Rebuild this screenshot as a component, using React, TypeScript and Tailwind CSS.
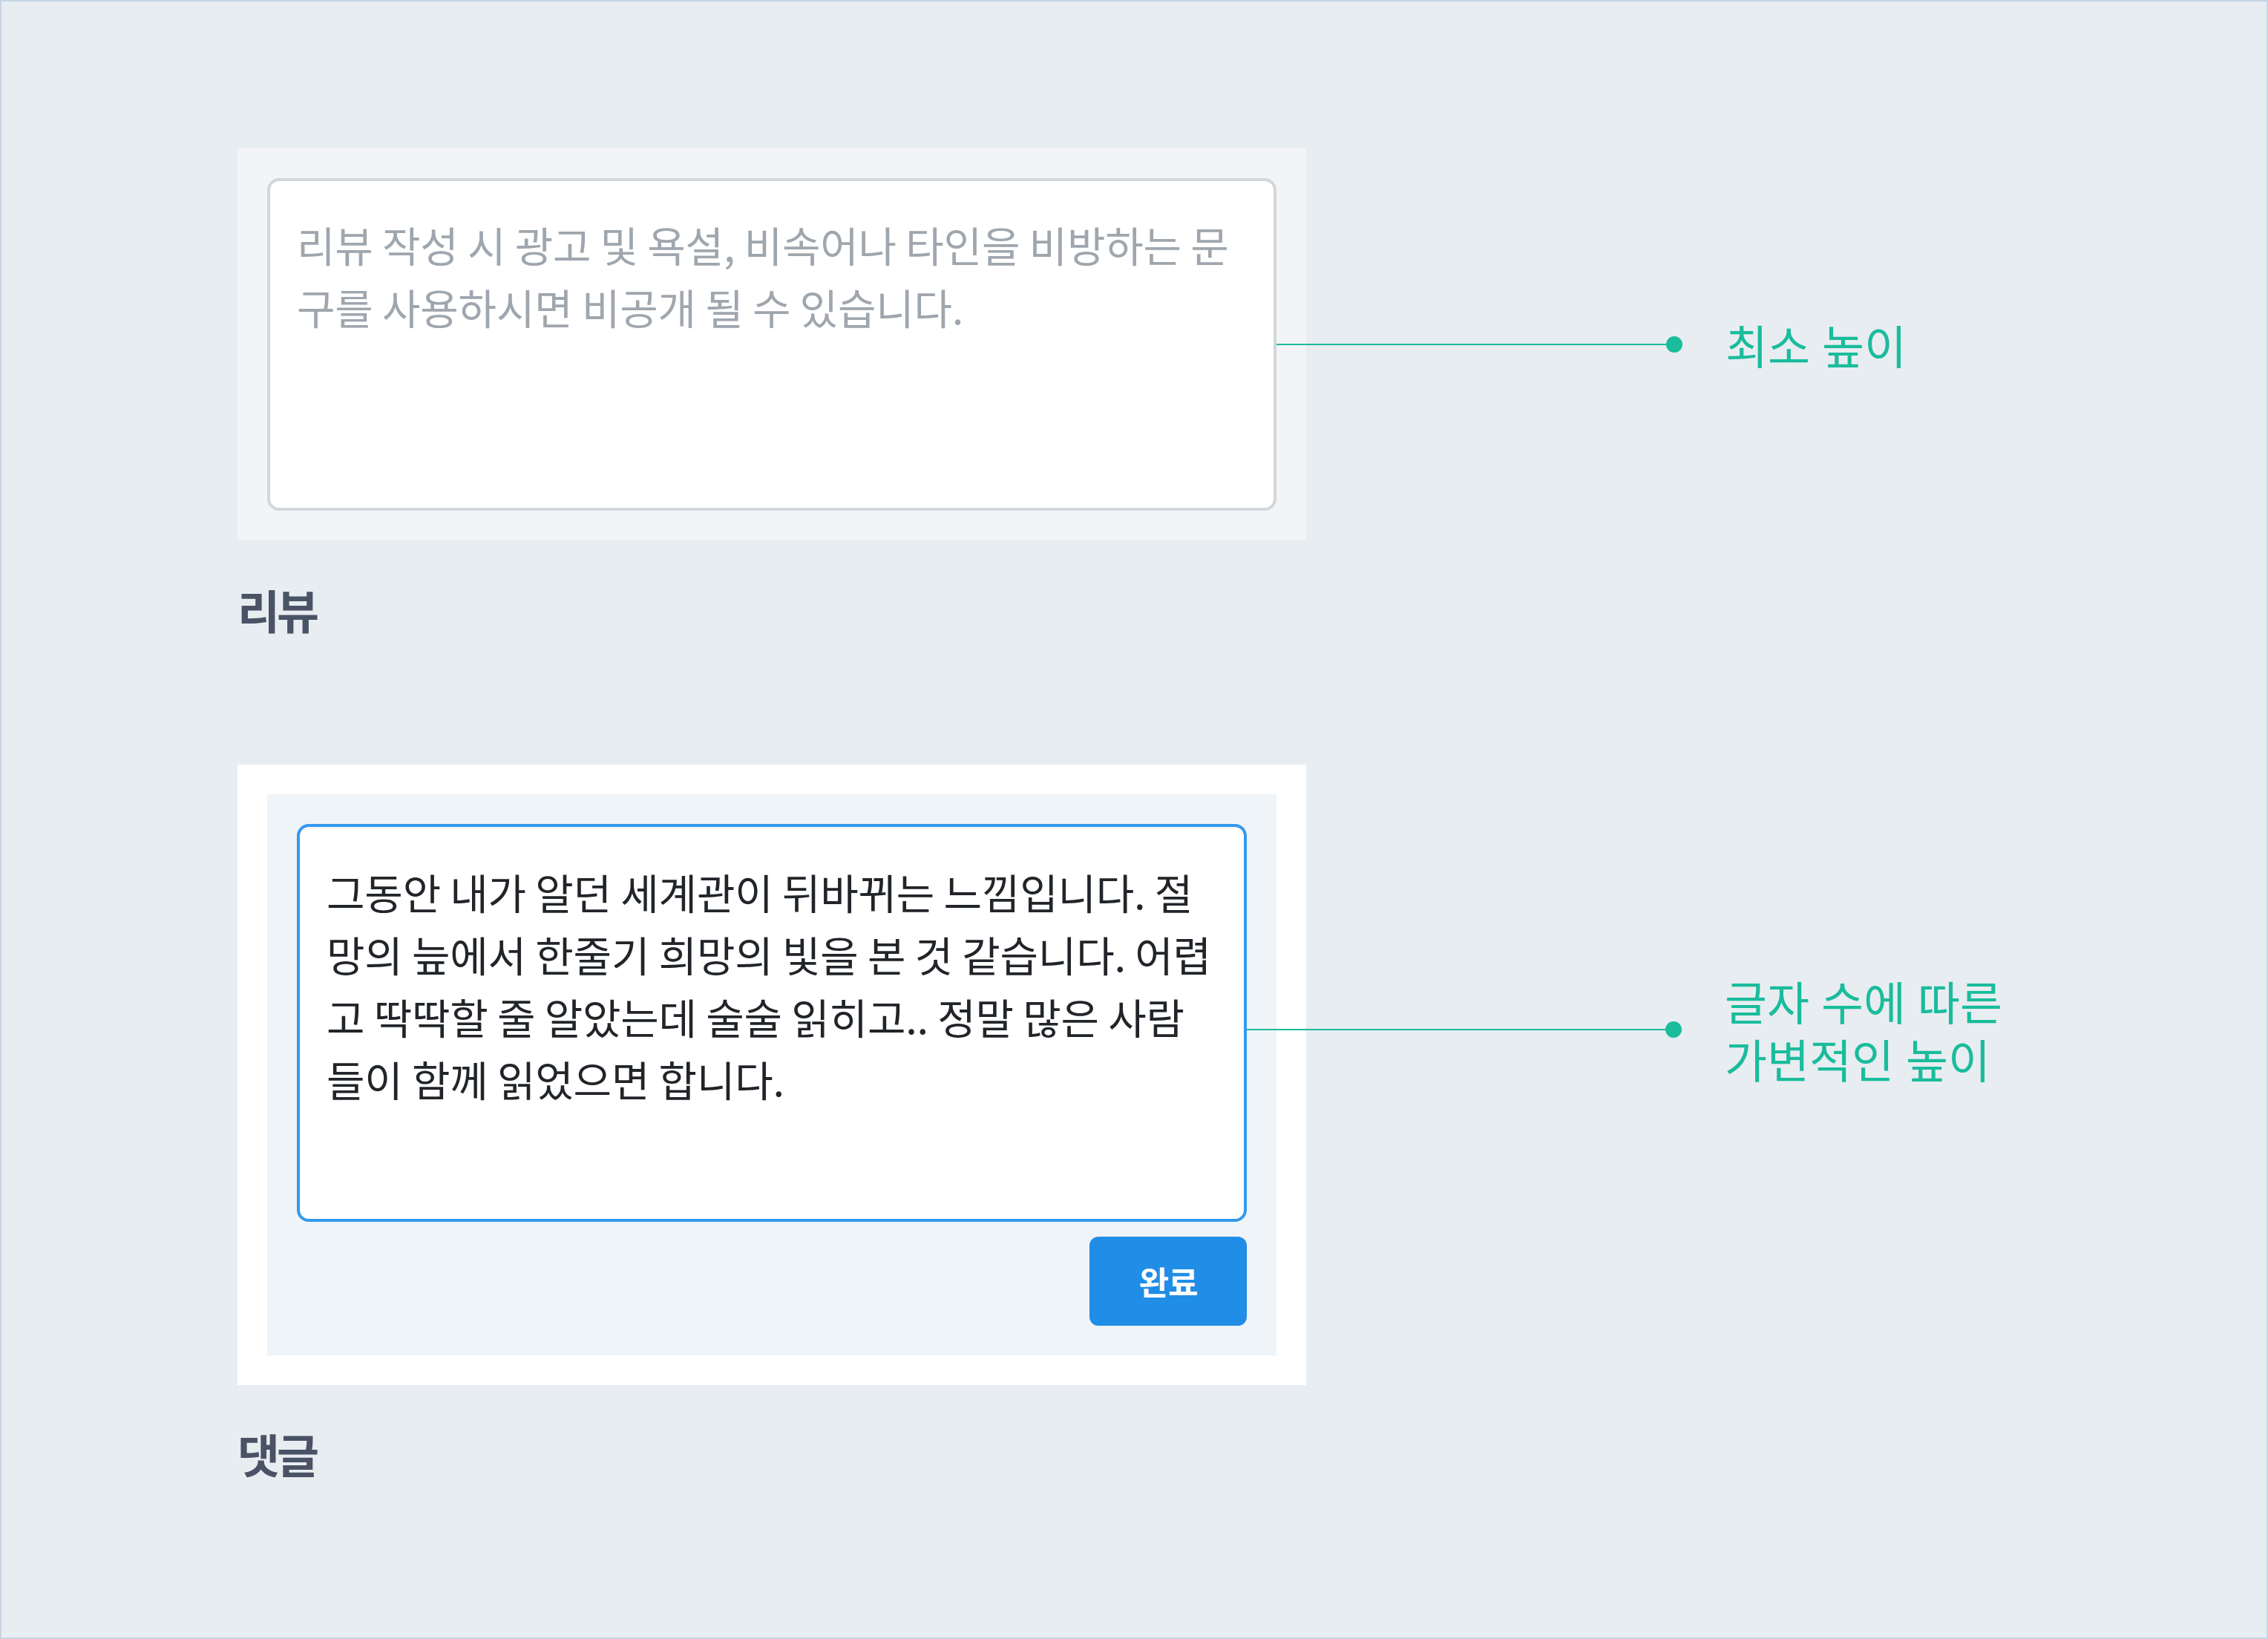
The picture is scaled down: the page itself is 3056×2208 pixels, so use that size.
import React from "react";

function Callout({ lineWidth, lines }: { lineWidth: number; lines: string[] }) {
  return (
    <div className="flex items-center">
      <div className="h-[2px] bg-[#1abc9c]" style={{ width: lineWidth }} />
      <div className="w-[22px] h-[22px] rounded-full bg-[#1abc9c] shrink-0" />
      <div className="ml-[58px] text-[62px] leading-[78px] [word-spacing:2px] text-[#1abc9c] whitespace-nowrap">
        {lines.map((l, i) => (
          <div key={i}>{l}</div>
        ))}
      </div>
    </div>
  );
}

export default function App() {
  return (
    <div className="w-[3056px] h-[2208px] border-2 border-[#c6d5e4] bg-[#e8edf1] pl-[318px] pt-[198px] font-['Noto_Sans_CJK_KR','Noto_Sans',sans-serif]">
      <div className="w-[1440px]">
        {/* Review */}
        <div className="bg-[#f3f4f6] p-[40px]">
          <div className="relative">
            <div className="h-[448px] rounded-[16px] border-4 border-[#d3d6db] bg-white pl-[36px] pt-[43px] text-[56px] leading-[84px] tracking-[-0.2px] text-[#9fa6ae] whitespace-nowrap">
              리뷰 작성 시 광고 및 욕설, 비속어나 타인을 비방하는 문
              <br />
              구를 사용하시면 비공개 될 수 있습니다.
            </div>
            <div className="absolute left-full top-1/2 -translate-y-1/2">
              <Callout lineWidth={525} lines={["최소 높이"]} />
            </div>
          </div>
        </div>
        <div className="mt-[62px] text-[62px] leading-[62px] font-semibold tracking-[-4px] text-[#4a5366]">
          리뷰
        </div>

        {/* Comment */}
        <div className="mt-[178px] bg-white p-[40px]">
          <div className="bg-[#eff4f8] p-[40px]">
            <div className="relative">
              <div className="h-[536px] rounded-[16px] border-4 border-[#3499ee] bg-white pl-[36px] pt-[45px] text-[56px] leading-[84px] tracking-[-0.2px] text-[#212529] whitespace-nowrap shadow-[inset_0_2px_3px_rgba(0,0,0,0.05)]">
                그동안 내가 알던 세계관이 뒤바뀌는 느낌입니다. 절
                <br />
                망의 늪에서 한줄기 희망의 빛을 본 것 같습니다. 어렵
                <br />
                고 딱딱할 줄 알았는데 술술 읽히고.. 정말 많은 사람
                <br />
                들이 함께 읽었으면 합니다.
              </div>
              <div className="absolute left-full top-[277px] -translate-y-1/2">
                <Callout lineWidth={564} lines={["글자 수에 따른", "가변적인 높이"]} />
              </div>
            </div>
            <div className="mt-[20px] flex justify-end">
              <button className="w-[212px] h-[120px] rounded-[12px] bg-[#208de6] text-white text-[44px] font-bold tracking-[-1px]">
                완료
              </button>
            </div>
          </div>
        </div>
        <div className="mt-[61px] text-[62px] leading-[62px] font-semibold tracking-[-4px] text-[#4a5366]">
          댓글
        </div>
      </div>
    </div>
  );
}
